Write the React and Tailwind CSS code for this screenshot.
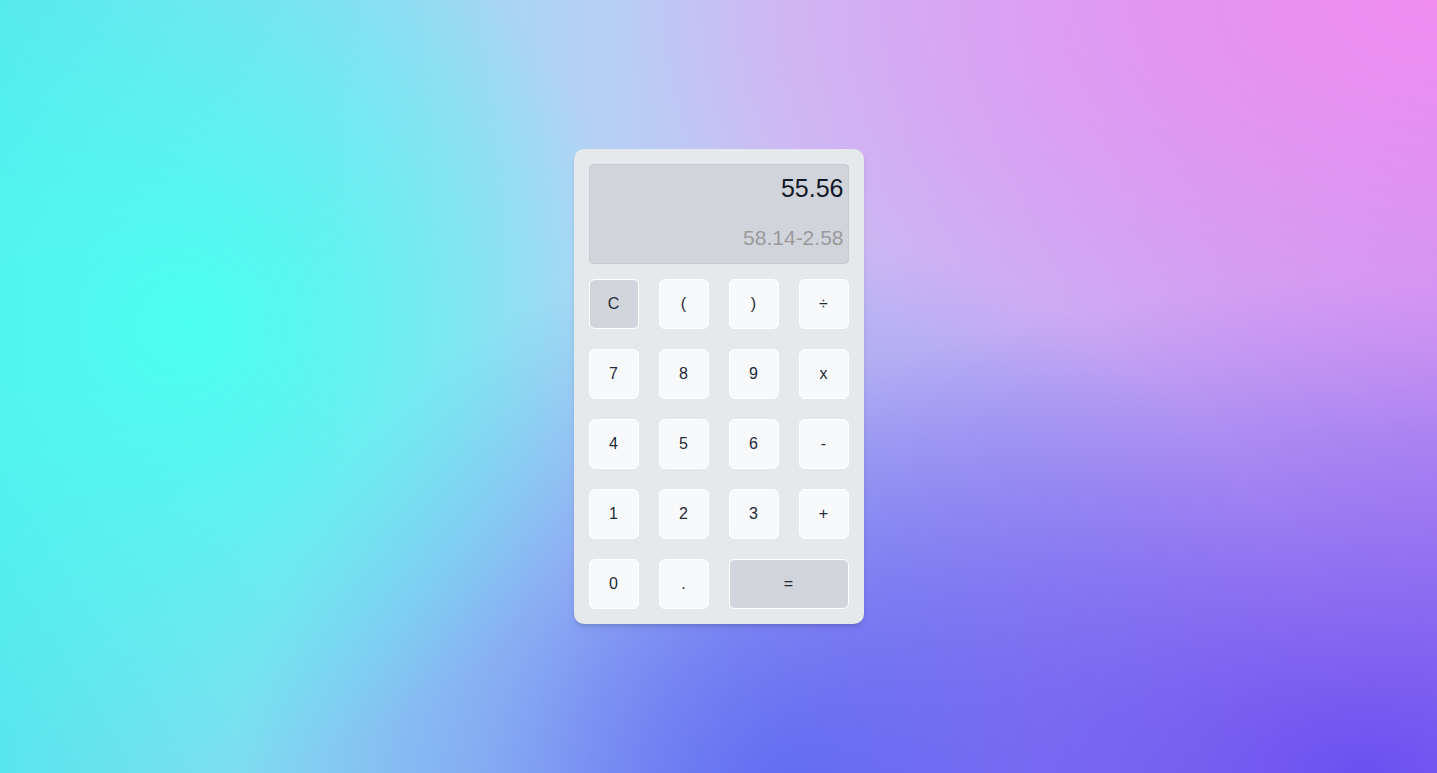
import React, { useState } from "react";

const keys = [
  { label: "C", kind: "op" },
  { label: "(" },
  { label: ")" },
  { label: "÷" },
  { label: "7" },
  { label: "8" },
  { label: "9" },
  { label: "x" },
  { label: "4" },
  { label: "5" },
  { label: "6" },
  { label: "-" },
  { label: "1" },
  { label: "2" },
  { label: "3" },
  { label: "+" },
  { label: "0" },
  { label: "." },
  { label: "=", kind: "op", wide: true },
];

const App = () => {
  const [result] = useState("55.56");
  const [expr] = useState("58.14-2.58");

  return (
    <div
      className="min-h-screen w-full flex items-center justify-center bg-[radial-gradient(circle_at_13%_42%,#4bfff0_0%,rgba(75,255,240,0)_34%),radial-gradient(ellipse_at_100%_0%,#f08cf2_0%,rgba(240,140,242,0)_40%),radial-gradient(ellipse_at_95%_100%,#6a50f0_0%,rgba(106,80,240,0)_45%),radial-gradient(ellipse_at_55%_105%,#5a78f2_0%,rgba(90,120,242,0)_50%),linear-gradient(to_right,#58e6ee,#b4d2f4_40%,#c8c0f4_55%,#c89af2)]"
      style={{ fontFamily: '"Liberation Sans", Arial, sans-serif' }}
    >
      <div className="w-[290px] bg-[#e6e9ec] rounded-[10px] p-[15px] shadow-md">
        {/* display */}
        <div className="h-[100px] bg-[#d1d5db] border border-[#c8ccd2] rounded-[4px] flex flex-col items-end justify-between pr-[4px] pt-[8px] pb-[13px]">
          <div className="text-[25px] leading-[30px] text-[#111827]">{result}</div>
          <div className="text-[21px] leading-[24px] text-[#9a9a9a]">{expr}</div>
        </div>

        {/* keys */}
        <div className="grid grid-cols-4 gap-[20px] mt-[15px]">
          {keys.map((k) => (
            <button
              key={k.label}
              className={`h-[50px] rounded-[6px] border border-white text-[16px] text-[#1f2937] flex items-center justify-center ${
                k.kind === "op" ? "bg-[#d1d5db]" : "bg-[#f8f9fb]"
              } ${k.wide ? "col-span-2" : ""}`}
            >
              {k.label}
            </button>
          ))}
        </div>
      </div>
    </div>
  );
};

export default App;
